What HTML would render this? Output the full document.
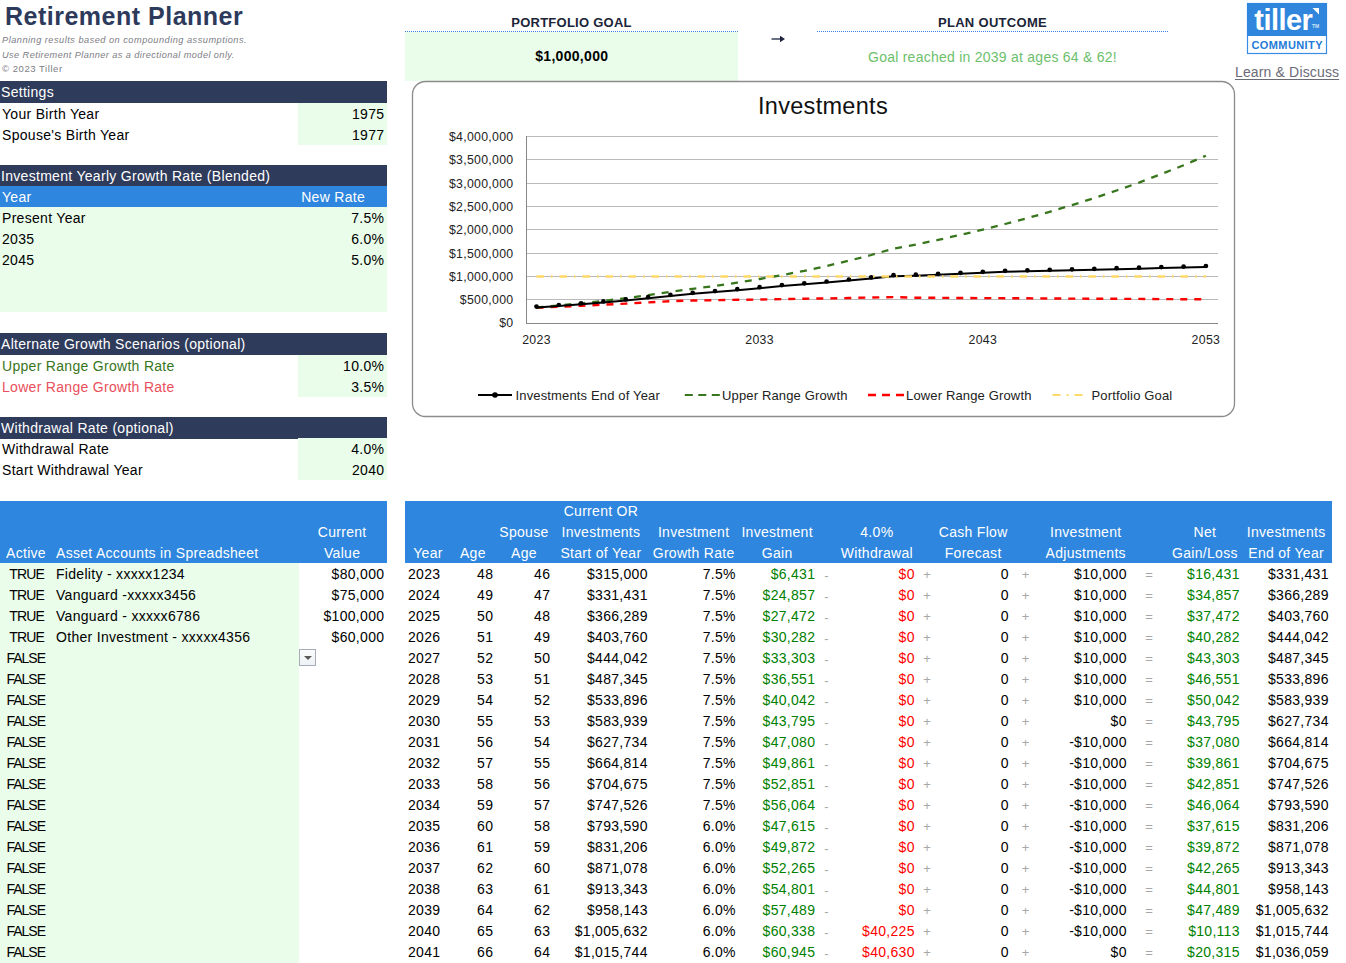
<!DOCTYPE html>
<html><head><meta charset="utf-8"><style>
html,body{margin:0;padding:0;background:#fff;}
body{width:1346px;height:963px;overflow:hidden;position:relative;font-family:"Liberation Sans",sans-serif;}
.t{position:absolute;white-space:nowrap;line-height:21px;height:21px;font-family:"Liberation Sans",sans-serif;}
</style></head><body>
<div class="t" style="left:5px;top:0.8px;color:#2d3a5c;font-size:25px;font-weight:bold;line-height:30px;height:30px;letter-spacing:0.5px;">Retirement Planner</div>
<div class="t" style="left:2px;top:32.5px;color:#7d7d85;font-size:9.2px;font-weight:normal;font-style:italic;line-height:14px;height:14px;letter-spacing:0.5px;">Planning results based on compounding assumptions.</div>
<div class="t" style="left:2px;top:47.5px;color:#7d7d85;font-size:9.2px;font-weight:normal;font-style:italic;line-height:14px;height:14px;letter-spacing:0.42px;">Use Retirement Planner as a directional model only.</div>
<div class="t" style="left:2px;top:62.3px;color:#7d7d85;font-size:9.5px;font-weight:normal;line-height:14px;height:14px;letter-spacing:0.55px;">© 2023 Tiller</div>
<div style="position:absolute;left:0px;top:81px;width:387px;height:22px;background:#2f3b5b;"></div>
<div class="t" style="left:1px;top:82px;color:#fff;font-size:14px;font-weight:normal;letter-spacing:0.3px;">Settings</div>
<div style="position:absolute;left:298px;top:103px;width:89px;height:42px;background:#eafcea;"></div>
<div class="t" style="left:2px;top:104px;color:#000;font-size:14px;font-weight:normal;letter-spacing:0.3px;">Your Birth Year</div>
<div class="t" style="left:-15.70px;width:400px;text-align:right;top:104px;color:#000;font-size:14px;font-weight:normal;letter-spacing:0.3px;">1975</div>
<div class="t" style="left:2px;top:125px;color:#000;font-size:14px;font-weight:normal;letter-spacing:0.3px;">Spouse's Birth Year</div>
<div class="t" style="left:-15.70px;width:400px;text-align:right;top:125px;color:#000;font-size:14px;font-weight:normal;letter-spacing:0.3px;">1977</div>
<div style="position:absolute;left:0px;top:165px;width:387px;height:21px;background:#2f3b5b;"></div>
<div class="t" style="left:1px;top:166px;color:#fff;font-size:14px;font-weight:normal;letter-spacing:0.3px;">Investment Yearly Growth Rate (Blended)</div>
<div style="position:absolute;left:0px;top:186px;width:387px;height:21px;background:#2e86de;"></div>
<div class="t" style="left:2px;top:187px;color:#fff;font-size:14px;font-weight:normal;letter-spacing:0.3px;">Year</div>
<div class="t" style="left:133.15px;width:400px;text-align:center;top:187px;color:#fff;font-size:14px;font-weight:normal;letter-spacing:0.3px;">New Rate</div>
<div style="position:absolute;left:0px;top:207px;width:387px;height:105px;background:#eafcea;"></div>
<div class="t" style="left:2px;top:208px;color:#000;font-size:14px;font-weight:normal;letter-spacing:0.3px;">Present Year</div>
<div class="t" style="left:-15.70px;width:400px;text-align:right;top:208px;color:#000;font-size:14px;font-weight:normal;letter-spacing:0.3px;">7.5%</div>
<div class="t" style="left:2px;top:229px;color:#000;font-size:14px;font-weight:normal;letter-spacing:0.3px;">2035</div>
<div class="t" style="left:-15.70px;width:400px;text-align:right;top:229px;color:#000;font-size:14px;font-weight:normal;letter-spacing:0.3px;">6.0%</div>
<div class="t" style="left:2px;top:250px;color:#000;font-size:14px;font-weight:normal;letter-spacing:0.3px;">2045</div>
<div class="t" style="left:-15.70px;width:400px;text-align:right;top:250px;color:#000;font-size:14px;font-weight:normal;letter-spacing:0.3px;">5.0%</div>
<div style="position:absolute;left:0px;top:333px;width:387px;height:22px;background:#2f3b5b;"></div>
<div class="t" style="left:1px;top:334px;color:#fff;font-size:14px;font-weight:normal;letter-spacing:0.3px;">Alternate Growth Scenarios (optional)</div>
<div style="position:absolute;left:298px;top:355px;width:89px;height:42px;background:#eafcea;"></div>
<div class="t" style="left:2px;top:356px;color:#38761d;font-size:14px;font-weight:normal;letter-spacing:0.3px;">Upper Range Growth Rate</div>
<div class="t" style="left:-15.70px;width:400px;text-align:right;top:356px;color:#000;font-size:14px;font-weight:normal;letter-spacing:0.3px;">10.0%</div>
<div class="t" style="left:2px;top:377px;color:#e94f5b;font-size:14px;font-weight:normal;letter-spacing:0.3px;">Lower Range Growth Rate</div>
<div class="t" style="left:-15.70px;width:400px;text-align:right;top:377px;color:#000;font-size:14px;font-weight:normal;letter-spacing:0.3px;">3.5%</div>
<div style="position:absolute;left:0px;top:417px;width:387px;height:21.6px;background:#2f3b5b;"></div>
<div class="t" style="left:1px;top:418px;color:#fff;font-size:14px;font-weight:normal;letter-spacing:0.3px;">Withdrawal Rate (optional)</div>
<div style="position:absolute;left:298px;top:438px;width:89px;height:42px;background:#eafcea;"></div>
<div class="t" style="left:2px;top:439px;color:#000;font-size:14px;font-weight:normal;letter-spacing:0.3px;">Withdrawal Rate</div>
<div class="t" style="left:-15.70px;width:400px;text-align:right;top:439px;color:#000;font-size:14px;font-weight:normal;letter-spacing:0.3px;">4.0%</div>
<div class="t" style="left:2px;top:460px;color:#000;font-size:14px;font-weight:normal;letter-spacing:0.3px;">Start Withdrawal Year</div>
<div class="t" style="left:-15.70px;width:400px;text-align:right;top:460px;color:#000;font-size:14px;font-weight:normal;letter-spacing:0.3px;">2040</div>
<div style="position:absolute;left:0px;top:501px;width:387px;height:62px;background:#2e86de;"></div>
<div class="t" style="left:6px;top:543px;color:#fff;font-size:14px;font-weight:normal;letter-spacing:0.3px;">Active</div>
<div class="t" style="left:56px;top:543px;color:#fff;font-size:14px;font-weight:normal;letter-spacing:0.3px;">Asset Accounts in Spreadsheet</div>
<div class="t" style="left:142.15px;width:400px;text-align:center;top:522px;color:#fff;font-size:14px;font-weight:normal;letter-spacing:0.3px;">Current</div>
<div class="t" style="left:142.15px;width:400px;text-align:center;top:543px;color:#fff;font-size:14px;font-weight:normal;letter-spacing:0.3px;">Value</div>
<div style="position:absolute;left:0px;top:563px;width:299px;height:400px;background:#eafcea;"></div>
<div class="t" style="left:-173.40px;width:400px;text-align:center;top:564px;color:#000;font-size:14px;font-weight:normal;letter-spacing:-0.9px;">TRUE</div>
<div class="t" style="left:56px;top:564px;color:#000;font-size:14px;font-weight:normal;letter-spacing:0.3px;">Fidelity - xxxxx1234</div>
<div class="t" style="left:-15.70px;width:400px;text-align:right;top:564px;color:#000;font-size:14px;font-weight:normal;letter-spacing:0.3px;">$80,000</div>
<div class="t" style="left:-173.40px;width:400px;text-align:center;top:585px;color:#000;font-size:14px;font-weight:normal;letter-spacing:-0.9px;">TRUE</div>
<div class="t" style="left:56px;top:585px;color:#000;font-size:14px;font-weight:normal;letter-spacing:0.3px;">Vanguard -xxxxx3456</div>
<div class="t" style="left:-15.70px;width:400px;text-align:right;top:585px;color:#000;font-size:14px;font-weight:normal;letter-spacing:0.3px;">$75,000</div>
<div class="t" style="left:-173.40px;width:400px;text-align:center;top:606px;color:#000;font-size:14px;font-weight:normal;letter-spacing:-0.9px;">TRUE</div>
<div class="t" style="left:56px;top:606px;color:#000;font-size:14px;font-weight:normal;letter-spacing:0.3px;">Vanguard - xxxxx6786</div>
<div class="t" style="left:-15.70px;width:400px;text-align:right;top:606px;color:#000;font-size:14px;font-weight:normal;letter-spacing:0.3px;">$100,000</div>
<div class="t" style="left:-173.40px;width:400px;text-align:center;top:627px;color:#000;font-size:14px;font-weight:normal;letter-spacing:-0.9px;">TRUE</div>
<div class="t" style="left:56px;top:627px;color:#000;font-size:14px;font-weight:normal;letter-spacing:0.3px;">Other Investment - xxxxx4356</div>
<div class="t" style="left:-15.70px;width:400px;text-align:right;top:627px;color:#000;font-size:14px;font-weight:normal;letter-spacing:0.3px;">$60,000</div>
<div class="t" style="left:-174.30px;width:400px;text-align:center;top:648px;color:#000;font-size:14px;font-weight:normal;letter-spacing:-1px;">FALSE</div>
<div class="t" style="left:-174.30px;width:400px;text-align:center;top:669px;color:#000;font-size:14px;font-weight:normal;letter-spacing:-1px;">FALSE</div>
<div class="t" style="left:-174.30px;width:400px;text-align:center;top:690px;color:#000;font-size:14px;font-weight:normal;letter-spacing:-1px;">FALSE</div>
<div class="t" style="left:-174.30px;width:400px;text-align:center;top:711px;color:#000;font-size:14px;font-weight:normal;letter-spacing:-1px;">FALSE</div>
<div class="t" style="left:-174.30px;width:400px;text-align:center;top:732px;color:#000;font-size:14px;font-weight:normal;letter-spacing:-1px;">FALSE</div>
<div class="t" style="left:-174.30px;width:400px;text-align:center;top:753px;color:#000;font-size:14px;font-weight:normal;letter-spacing:-1px;">FALSE</div>
<div class="t" style="left:-174.30px;width:400px;text-align:center;top:774px;color:#000;font-size:14px;font-weight:normal;letter-spacing:-1px;">FALSE</div>
<div class="t" style="left:-174.30px;width:400px;text-align:center;top:795px;color:#000;font-size:14px;font-weight:normal;letter-spacing:-1px;">FALSE</div>
<div class="t" style="left:-174.30px;width:400px;text-align:center;top:816px;color:#000;font-size:14px;font-weight:normal;letter-spacing:-1px;">FALSE</div>
<div class="t" style="left:-174.30px;width:400px;text-align:center;top:837px;color:#000;font-size:14px;font-weight:normal;letter-spacing:-1px;">FALSE</div>
<div class="t" style="left:-174.30px;width:400px;text-align:center;top:858px;color:#000;font-size:14px;font-weight:normal;letter-spacing:-1px;">FALSE</div>
<div class="t" style="left:-174.30px;width:400px;text-align:center;top:879px;color:#000;font-size:14px;font-weight:normal;letter-spacing:-1px;">FALSE</div>
<div class="t" style="left:-174.30px;width:400px;text-align:center;top:900px;color:#000;font-size:14px;font-weight:normal;letter-spacing:-1px;">FALSE</div>
<div class="t" style="left:-174.30px;width:400px;text-align:center;top:921px;color:#000;font-size:14px;font-weight:normal;letter-spacing:-1px;">FALSE</div>
<div class="t" style="left:-174.30px;width:400px;text-align:center;top:942px;color:#000;font-size:14px;font-weight:normal;letter-spacing:-1px;">FALSE</div>
<div style="position:absolute;left:299px;top:649px;width:17px;height:17px;border:1px solid #a7adb7;background:linear-gradient(#fbfcfd,#eef1f5);box-sizing:border-box"></div>
<div style="position:absolute;left:303.5px;top:656px;width:0;height:0;border-left:4px solid transparent;border-right:4px solid transparent;border-top:4.5px solid #5a5a5a"></div>
<div style="position:absolute;left:405px;top:501px;width:927px;height:62px;background:#2e86de;"></div>
<div class="t" style="left:227.95px;width:400px;text-align:center;top:543px;color:#fff;font-size:14px;font-weight:normal;letter-spacing:0.3px;">Year</div>
<div class="t" style="left:272.85px;width:400px;text-align:center;top:543px;color:#fff;font-size:14px;font-weight:normal;letter-spacing:0.3px;">Age</div>
<div class="t" style="left:323.95px;width:400px;text-align:center;top:522px;color:#fff;font-size:14px;font-weight:normal;letter-spacing:0.3px;">Spouse</div>
<div class="t" style="left:323.95px;width:400px;text-align:center;top:543px;color:#fff;font-size:14px;font-weight:normal;letter-spacing:0.3px;">Age</div>
<div class="t" style="left:400.95px;width:400px;text-align:center;top:501px;color:#fff;font-size:14px;font-weight:normal;letter-spacing:0.3px;">Current OR</div>
<div class="t" style="left:400.95px;width:400px;text-align:center;top:522px;color:#fff;font-size:14px;font-weight:normal;letter-spacing:0.3px;">Investments</div>
<div class="t" style="left:400.95px;width:400px;text-align:center;top:543px;color:#fff;font-size:14px;font-weight:normal;letter-spacing:0.3px;">Start of Year</div>
<div class="t" style="left:493.65px;width:400px;text-align:center;top:522px;color:#fff;font-size:14px;font-weight:normal;letter-spacing:0.3px;">Investment</div>
<div class="t" style="left:493.65px;width:400px;text-align:center;top:543px;color:#fff;font-size:14px;font-weight:normal;letter-spacing:0.3px;">Growth Rate</div>
<div class="t" style="left:577.15px;width:400px;text-align:center;top:522px;color:#fff;font-size:14px;font-weight:normal;letter-spacing:0.3px;">Investment</div>
<div class="t" style="left:577.15px;width:400px;text-align:center;top:543px;color:#fff;font-size:14px;font-weight:normal;letter-spacing:0.3px;">Gain</div>
<div class="t" style="left:676.85px;width:400px;text-align:center;top:522px;color:#fff;font-size:14px;font-weight:normal;letter-spacing:0.3px;">4.0%</div>
<div class="t" style="left:676.85px;width:400px;text-align:center;top:543px;color:#fff;font-size:14px;font-weight:normal;letter-spacing:0.3px;">Withdrawal</div>
<div class="t" style="left:773.15px;width:400px;text-align:center;top:522px;color:#fff;font-size:14px;font-weight:normal;letter-spacing:0.3px;">Cash Flow</div>
<div class="t" style="left:773.15px;width:400px;text-align:center;top:543px;color:#fff;font-size:14px;font-weight:normal;letter-spacing:0.3px;">Forecast</div>
<div class="t" style="left:885.75px;width:400px;text-align:center;top:522px;color:#fff;font-size:14px;font-weight:normal;letter-spacing:0.3px;">Investment</div>
<div class="t" style="left:885.75px;width:400px;text-align:center;top:543px;color:#fff;font-size:14px;font-weight:normal;letter-spacing:0.3px;">Adjustments</div>
<div class="t" style="left:1004.95px;width:400px;text-align:center;top:522px;color:#fff;font-size:14px;font-weight:normal;letter-spacing:0.3px;">Net</div>
<div class="t" style="left:1004.95px;width:400px;text-align:center;top:543px;color:#fff;font-size:14px;font-weight:normal;letter-spacing:0.3px;">Gain/Loss</div>
<div class="t" style="left:1086.15px;width:400px;text-align:center;top:522px;color:#fff;font-size:14px;font-weight:normal;letter-spacing:0.3px;">Investments</div>
<div class="t" style="left:1086.15px;width:400px;text-align:center;top:543px;color:#fff;font-size:14px;font-weight:normal;letter-spacing:0.3px;">End of Year</div>
<div class="t" style="left:408px;top:564px;color:#000;font-size:14px;font-weight:normal;letter-spacing:0.3px;">2023</div>
<div class="t" style="left:93.30px;width:400px;text-align:right;top:564px;color:#000;font-size:14px;font-weight:normal;letter-spacing:0.3px;">48</div>
<div class="t" style="left:150.30px;width:400px;text-align:right;top:564px;color:#000;font-size:14px;font-weight:normal;letter-spacing:0.3px;">46</div>
<div class="t" style="left:247.80px;width:400px;text-align:right;top:564px;color:#000;font-size:14px;font-weight:normal;letter-spacing:0.3px;">$315,000</div>
<div class="t" style="left:335.80px;width:400px;text-align:right;top:564px;color:#000;font-size:14px;font-weight:normal;letter-spacing:0.3px;">7.5%</div>
<div class="t" style="left:415.30px;width:400px;text-align:right;top:564px;color:#008000;font-size:14px;font-weight:normal;letter-spacing:0.3px;">$6,431</div>
<div class="t" style="left:626.65px;width:400px;text-align:center;top:564.8px;color:#a8a8a8;font-size:13px;font-weight:normal;letter-spacing:0.3px;">-</div>
<div class="t" style="left:514.80px;width:400px;text-align:right;top:564px;color:#ff0000;font-size:14px;font-weight:normal;letter-spacing:0.3px;">$0</div>
<div class="t" style="left:727.15px;width:400px;text-align:center;top:564px;color:#a8a8a8;font-size:13px;font-weight:normal;letter-spacing:0.3px;">+</div>
<div class="t" style="left:608.80px;width:400px;text-align:right;top:564px;color:#000;font-size:14px;font-weight:normal;letter-spacing:0.3px;">0</div>
<div class="t" style="left:825.65px;width:400px;text-align:center;top:564px;color:#a8a8a8;font-size:13px;font-weight:normal;letter-spacing:0.3px;">+</div>
<div class="t" style="left:726.80px;width:400px;text-align:right;top:564px;color:#000;font-size:14px;font-weight:normal;letter-spacing:0.3px;">$10,000</div>
<div class="t" style="left:949.15px;width:400px;text-align:center;top:564px;color:#a8a8a8;font-size:13px;font-weight:normal;letter-spacing:0.3px;">=</div>
<div class="t" style="left:839.80px;width:400px;text-align:right;top:564px;color:#008000;font-size:14px;font-weight:normal;letter-spacing:0.3px;">$16,431</div>
<div class="t" style="left:928.80px;width:400px;text-align:right;top:564px;color:#000;font-size:14px;font-weight:normal;letter-spacing:0.3px;">$331,431</div>
<div class="t" style="left:408px;top:585px;color:#000;font-size:14px;font-weight:normal;letter-spacing:0.3px;">2024</div>
<div class="t" style="left:93.30px;width:400px;text-align:right;top:585px;color:#000;font-size:14px;font-weight:normal;letter-spacing:0.3px;">49</div>
<div class="t" style="left:150.30px;width:400px;text-align:right;top:585px;color:#000;font-size:14px;font-weight:normal;letter-spacing:0.3px;">47</div>
<div class="t" style="left:247.80px;width:400px;text-align:right;top:585px;color:#000;font-size:14px;font-weight:normal;letter-spacing:0.3px;">$331,431</div>
<div class="t" style="left:335.80px;width:400px;text-align:right;top:585px;color:#000;font-size:14px;font-weight:normal;letter-spacing:0.3px;">7.5%</div>
<div class="t" style="left:415.30px;width:400px;text-align:right;top:585px;color:#008000;font-size:14px;font-weight:normal;letter-spacing:0.3px;">$24,857</div>
<div class="t" style="left:626.65px;width:400px;text-align:center;top:585.8px;color:#a8a8a8;font-size:13px;font-weight:normal;letter-spacing:0.3px;">-</div>
<div class="t" style="left:514.80px;width:400px;text-align:right;top:585px;color:#ff0000;font-size:14px;font-weight:normal;letter-spacing:0.3px;">$0</div>
<div class="t" style="left:727.15px;width:400px;text-align:center;top:585px;color:#a8a8a8;font-size:13px;font-weight:normal;letter-spacing:0.3px;">+</div>
<div class="t" style="left:608.80px;width:400px;text-align:right;top:585px;color:#000;font-size:14px;font-weight:normal;letter-spacing:0.3px;">0</div>
<div class="t" style="left:825.65px;width:400px;text-align:center;top:585px;color:#a8a8a8;font-size:13px;font-weight:normal;letter-spacing:0.3px;">+</div>
<div class="t" style="left:726.80px;width:400px;text-align:right;top:585px;color:#000;font-size:14px;font-weight:normal;letter-spacing:0.3px;">$10,000</div>
<div class="t" style="left:949.15px;width:400px;text-align:center;top:585px;color:#a8a8a8;font-size:13px;font-weight:normal;letter-spacing:0.3px;">=</div>
<div class="t" style="left:839.80px;width:400px;text-align:right;top:585px;color:#008000;font-size:14px;font-weight:normal;letter-spacing:0.3px;">$34,857</div>
<div class="t" style="left:928.80px;width:400px;text-align:right;top:585px;color:#000;font-size:14px;font-weight:normal;letter-spacing:0.3px;">$366,289</div>
<div class="t" style="left:408px;top:606px;color:#000;font-size:14px;font-weight:normal;letter-spacing:0.3px;">2025</div>
<div class="t" style="left:93.30px;width:400px;text-align:right;top:606px;color:#000;font-size:14px;font-weight:normal;letter-spacing:0.3px;">50</div>
<div class="t" style="left:150.30px;width:400px;text-align:right;top:606px;color:#000;font-size:14px;font-weight:normal;letter-spacing:0.3px;">48</div>
<div class="t" style="left:247.80px;width:400px;text-align:right;top:606px;color:#000;font-size:14px;font-weight:normal;letter-spacing:0.3px;">$366,289</div>
<div class="t" style="left:335.80px;width:400px;text-align:right;top:606px;color:#000;font-size:14px;font-weight:normal;letter-spacing:0.3px;">7.5%</div>
<div class="t" style="left:415.30px;width:400px;text-align:right;top:606px;color:#008000;font-size:14px;font-weight:normal;letter-spacing:0.3px;">$27,472</div>
<div class="t" style="left:626.65px;width:400px;text-align:center;top:606.8px;color:#a8a8a8;font-size:13px;font-weight:normal;letter-spacing:0.3px;">-</div>
<div class="t" style="left:514.80px;width:400px;text-align:right;top:606px;color:#ff0000;font-size:14px;font-weight:normal;letter-spacing:0.3px;">$0</div>
<div class="t" style="left:727.15px;width:400px;text-align:center;top:606px;color:#a8a8a8;font-size:13px;font-weight:normal;letter-spacing:0.3px;">+</div>
<div class="t" style="left:608.80px;width:400px;text-align:right;top:606px;color:#000;font-size:14px;font-weight:normal;letter-spacing:0.3px;">0</div>
<div class="t" style="left:825.65px;width:400px;text-align:center;top:606px;color:#a8a8a8;font-size:13px;font-weight:normal;letter-spacing:0.3px;">+</div>
<div class="t" style="left:726.80px;width:400px;text-align:right;top:606px;color:#000;font-size:14px;font-weight:normal;letter-spacing:0.3px;">$10,000</div>
<div class="t" style="left:949.15px;width:400px;text-align:center;top:606px;color:#a8a8a8;font-size:13px;font-weight:normal;letter-spacing:0.3px;">=</div>
<div class="t" style="left:839.80px;width:400px;text-align:right;top:606px;color:#008000;font-size:14px;font-weight:normal;letter-spacing:0.3px;">$37,472</div>
<div class="t" style="left:928.80px;width:400px;text-align:right;top:606px;color:#000;font-size:14px;font-weight:normal;letter-spacing:0.3px;">$403,760</div>
<div class="t" style="left:408px;top:627px;color:#000;font-size:14px;font-weight:normal;letter-spacing:0.3px;">2026</div>
<div class="t" style="left:93.30px;width:400px;text-align:right;top:627px;color:#000;font-size:14px;font-weight:normal;letter-spacing:0.3px;">51</div>
<div class="t" style="left:150.30px;width:400px;text-align:right;top:627px;color:#000;font-size:14px;font-weight:normal;letter-spacing:0.3px;">49</div>
<div class="t" style="left:247.80px;width:400px;text-align:right;top:627px;color:#000;font-size:14px;font-weight:normal;letter-spacing:0.3px;">$403,760</div>
<div class="t" style="left:335.80px;width:400px;text-align:right;top:627px;color:#000;font-size:14px;font-weight:normal;letter-spacing:0.3px;">7.5%</div>
<div class="t" style="left:415.30px;width:400px;text-align:right;top:627px;color:#008000;font-size:14px;font-weight:normal;letter-spacing:0.3px;">$30,282</div>
<div class="t" style="left:626.65px;width:400px;text-align:center;top:627.8px;color:#a8a8a8;font-size:13px;font-weight:normal;letter-spacing:0.3px;">-</div>
<div class="t" style="left:514.80px;width:400px;text-align:right;top:627px;color:#ff0000;font-size:14px;font-weight:normal;letter-spacing:0.3px;">$0</div>
<div class="t" style="left:727.15px;width:400px;text-align:center;top:627px;color:#a8a8a8;font-size:13px;font-weight:normal;letter-spacing:0.3px;">+</div>
<div class="t" style="left:608.80px;width:400px;text-align:right;top:627px;color:#000;font-size:14px;font-weight:normal;letter-spacing:0.3px;">0</div>
<div class="t" style="left:825.65px;width:400px;text-align:center;top:627px;color:#a8a8a8;font-size:13px;font-weight:normal;letter-spacing:0.3px;">+</div>
<div class="t" style="left:726.80px;width:400px;text-align:right;top:627px;color:#000;font-size:14px;font-weight:normal;letter-spacing:0.3px;">$10,000</div>
<div class="t" style="left:949.15px;width:400px;text-align:center;top:627px;color:#a8a8a8;font-size:13px;font-weight:normal;letter-spacing:0.3px;">=</div>
<div class="t" style="left:839.80px;width:400px;text-align:right;top:627px;color:#008000;font-size:14px;font-weight:normal;letter-spacing:0.3px;">$40,282</div>
<div class="t" style="left:928.80px;width:400px;text-align:right;top:627px;color:#000;font-size:14px;font-weight:normal;letter-spacing:0.3px;">$444,042</div>
<div class="t" style="left:408px;top:648px;color:#000;font-size:14px;font-weight:normal;letter-spacing:0.3px;">2027</div>
<div class="t" style="left:93.30px;width:400px;text-align:right;top:648px;color:#000;font-size:14px;font-weight:normal;letter-spacing:0.3px;">52</div>
<div class="t" style="left:150.30px;width:400px;text-align:right;top:648px;color:#000;font-size:14px;font-weight:normal;letter-spacing:0.3px;">50</div>
<div class="t" style="left:247.80px;width:400px;text-align:right;top:648px;color:#000;font-size:14px;font-weight:normal;letter-spacing:0.3px;">$444,042</div>
<div class="t" style="left:335.80px;width:400px;text-align:right;top:648px;color:#000;font-size:14px;font-weight:normal;letter-spacing:0.3px;">7.5%</div>
<div class="t" style="left:415.30px;width:400px;text-align:right;top:648px;color:#008000;font-size:14px;font-weight:normal;letter-spacing:0.3px;">$33,303</div>
<div class="t" style="left:626.65px;width:400px;text-align:center;top:648.8px;color:#a8a8a8;font-size:13px;font-weight:normal;letter-spacing:0.3px;">-</div>
<div class="t" style="left:514.80px;width:400px;text-align:right;top:648px;color:#ff0000;font-size:14px;font-weight:normal;letter-spacing:0.3px;">$0</div>
<div class="t" style="left:727.15px;width:400px;text-align:center;top:648px;color:#a8a8a8;font-size:13px;font-weight:normal;letter-spacing:0.3px;">+</div>
<div class="t" style="left:608.80px;width:400px;text-align:right;top:648px;color:#000;font-size:14px;font-weight:normal;letter-spacing:0.3px;">0</div>
<div class="t" style="left:825.65px;width:400px;text-align:center;top:648px;color:#a8a8a8;font-size:13px;font-weight:normal;letter-spacing:0.3px;">+</div>
<div class="t" style="left:726.80px;width:400px;text-align:right;top:648px;color:#000;font-size:14px;font-weight:normal;letter-spacing:0.3px;">$10,000</div>
<div class="t" style="left:949.15px;width:400px;text-align:center;top:648px;color:#a8a8a8;font-size:13px;font-weight:normal;letter-spacing:0.3px;">=</div>
<div class="t" style="left:839.80px;width:400px;text-align:right;top:648px;color:#008000;font-size:14px;font-weight:normal;letter-spacing:0.3px;">$43,303</div>
<div class="t" style="left:928.80px;width:400px;text-align:right;top:648px;color:#000;font-size:14px;font-weight:normal;letter-spacing:0.3px;">$487,345</div>
<div class="t" style="left:408px;top:669px;color:#000;font-size:14px;font-weight:normal;letter-spacing:0.3px;">2028</div>
<div class="t" style="left:93.30px;width:400px;text-align:right;top:669px;color:#000;font-size:14px;font-weight:normal;letter-spacing:0.3px;">53</div>
<div class="t" style="left:150.30px;width:400px;text-align:right;top:669px;color:#000;font-size:14px;font-weight:normal;letter-spacing:0.3px;">51</div>
<div class="t" style="left:247.80px;width:400px;text-align:right;top:669px;color:#000;font-size:14px;font-weight:normal;letter-spacing:0.3px;">$487,345</div>
<div class="t" style="left:335.80px;width:400px;text-align:right;top:669px;color:#000;font-size:14px;font-weight:normal;letter-spacing:0.3px;">7.5%</div>
<div class="t" style="left:415.30px;width:400px;text-align:right;top:669px;color:#008000;font-size:14px;font-weight:normal;letter-spacing:0.3px;">$36,551</div>
<div class="t" style="left:626.65px;width:400px;text-align:center;top:669.8px;color:#a8a8a8;font-size:13px;font-weight:normal;letter-spacing:0.3px;">-</div>
<div class="t" style="left:514.80px;width:400px;text-align:right;top:669px;color:#ff0000;font-size:14px;font-weight:normal;letter-spacing:0.3px;">$0</div>
<div class="t" style="left:727.15px;width:400px;text-align:center;top:669px;color:#a8a8a8;font-size:13px;font-weight:normal;letter-spacing:0.3px;">+</div>
<div class="t" style="left:608.80px;width:400px;text-align:right;top:669px;color:#000;font-size:14px;font-weight:normal;letter-spacing:0.3px;">0</div>
<div class="t" style="left:825.65px;width:400px;text-align:center;top:669px;color:#a8a8a8;font-size:13px;font-weight:normal;letter-spacing:0.3px;">+</div>
<div class="t" style="left:726.80px;width:400px;text-align:right;top:669px;color:#000;font-size:14px;font-weight:normal;letter-spacing:0.3px;">$10,000</div>
<div class="t" style="left:949.15px;width:400px;text-align:center;top:669px;color:#a8a8a8;font-size:13px;font-weight:normal;letter-spacing:0.3px;">=</div>
<div class="t" style="left:839.80px;width:400px;text-align:right;top:669px;color:#008000;font-size:14px;font-weight:normal;letter-spacing:0.3px;">$46,551</div>
<div class="t" style="left:928.80px;width:400px;text-align:right;top:669px;color:#000;font-size:14px;font-weight:normal;letter-spacing:0.3px;">$533,896</div>
<div class="t" style="left:408px;top:690px;color:#000;font-size:14px;font-weight:normal;letter-spacing:0.3px;">2029</div>
<div class="t" style="left:93.30px;width:400px;text-align:right;top:690px;color:#000;font-size:14px;font-weight:normal;letter-spacing:0.3px;">54</div>
<div class="t" style="left:150.30px;width:400px;text-align:right;top:690px;color:#000;font-size:14px;font-weight:normal;letter-spacing:0.3px;">52</div>
<div class="t" style="left:247.80px;width:400px;text-align:right;top:690px;color:#000;font-size:14px;font-weight:normal;letter-spacing:0.3px;">$533,896</div>
<div class="t" style="left:335.80px;width:400px;text-align:right;top:690px;color:#000;font-size:14px;font-weight:normal;letter-spacing:0.3px;">7.5%</div>
<div class="t" style="left:415.30px;width:400px;text-align:right;top:690px;color:#008000;font-size:14px;font-weight:normal;letter-spacing:0.3px;">$40,042</div>
<div class="t" style="left:626.65px;width:400px;text-align:center;top:690.8px;color:#a8a8a8;font-size:13px;font-weight:normal;letter-spacing:0.3px;">-</div>
<div class="t" style="left:514.80px;width:400px;text-align:right;top:690px;color:#ff0000;font-size:14px;font-weight:normal;letter-spacing:0.3px;">$0</div>
<div class="t" style="left:727.15px;width:400px;text-align:center;top:690px;color:#a8a8a8;font-size:13px;font-weight:normal;letter-spacing:0.3px;">+</div>
<div class="t" style="left:608.80px;width:400px;text-align:right;top:690px;color:#000;font-size:14px;font-weight:normal;letter-spacing:0.3px;">0</div>
<div class="t" style="left:825.65px;width:400px;text-align:center;top:690px;color:#a8a8a8;font-size:13px;font-weight:normal;letter-spacing:0.3px;">+</div>
<div class="t" style="left:726.80px;width:400px;text-align:right;top:690px;color:#000;font-size:14px;font-weight:normal;letter-spacing:0.3px;">$10,000</div>
<div class="t" style="left:949.15px;width:400px;text-align:center;top:690px;color:#a8a8a8;font-size:13px;font-weight:normal;letter-spacing:0.3px;">=</div>
<div class="t" style="left:839.80px;width:400px;text-align:right;top:690px;color:#008000;font-size:14px;font-weight:normal;letter-spacing:0.3px;">$50,042</div>
<div class="t" style="left:928.80px;width:400px;text-align:right;top:690px;color:#000;font-size:14px;font-weight:normal;letter-spacing:0.3px;">$583,939</div>
<div class="t" style="left:408px;top:711px;color:#000;font-size:14px;font-weight:normal;letter-spacing:0.3px;">2030</div>
<div class="t" style="left:93.30px;width:400px;text-align:right;top:711px;color:#000;font-size:14px;font-weight:normal;letter-spacing:0.3px;">55</div>
<div class="t" style="left:150.30px;width:400px;text-align:right;top:711px;color:#000;font-size:14px;font-weight:normal;letter-spacing:0.3px;">53</div>
<div class="t" style="left:247.80px;width:400px;text-align:right;top:711px;color:#000;font-size:14px;font-weight:normal;letter-spacing:0.3px;">$583,939</div>
<div class="t" style="left:335.80px;width:400px;text-align:right;top:711px;color:#000;font-size:14px;font-weight:normal;letter-spacing:0.3px;">7.5%</div>
<div class="t" style="left:415.30px;width:400px;text-align:right;top:711px;color:#008000;font-size:14px;font-weight:normal;letter-spacing:0.3px;">$43,795</div>
<div class="t" style="left:626.65px;width:400px;text-align:center;top:711.8px;color:#a8a8a8;font-size:13px;font-weight:normal;letter-spacing:0.3px;">-</div>
<div class="t" style="left:514.80px;width:400px;text-align:right;top:711px;color:#ff0000;font-size:14px;font-weight:normal;letter-spacing:0.3px;">$0</div>
<div class="t" style="left:727.15px;width:400px;text-align:center;top:711px;color:#a8a8a8;font-size:13px;font-weight:normal;letter-spacing:0.3px;">+</div>
<div class="t" style="left:608.80px;width:400px;text-align:right;top:711px;color:#000;font-size:14px;font-weight:normal;letter-spacing:0.3px;">0</div>
<div class="t" style="left:825.65px;width:400px;text-align:center;top:711px;color:#a8a8a8;font-size:13px;font-weight:normal;letter-spacing:0.3px;">+</div>
<div class="t" style="left:726.80px;width:400px;text-align:right;top:711px;color:#000;font-size:14px;font-weight:normal;letter-spacing:0.3px;">$0</div>
<div class="t" style="left:949.15px;width:400px;text-align:center;top:711px;color:#a8a8a8;font-size:13px;font-weight:normal;letter-spacing:0.3px;">=</div>
<div class="t" style="left:839.80px;width:400px;text-align:right;top:711px;color:#008000;font-size:14px;font-weight:normal;letter-spacing:0.3px;">$43,795</div>
<div class="t" style="left:928.80px;width:400px;text-align:right;top:711px;color:#000;font-size:14px;font-weight:normal;letter-spacing:0.3px;">$627,734</div>
<div class="t" style="left:408px;top:732px;color:#000;font-size:14px;font-weight:normal;letter-spacing:0.3px;">2031</div>
<div class="t" style="left:93.30px;width:400px;text-align:right;top:732px;color:#000;font-size:14px;font-weight:normal;letter-spacing:0.3px;">56</div>
<div class="t" style="left:150.30px;width:400px;text-align:right;top:732px;color:#000;font-size:14px;font-weight:normal;letter-spacing:0.3px;">54</div>
<div class="t" style="left:247.80px;width:400px;text-align:right;top:732px;color:#000;font-size:14px;font-weight:normal;letter-spacing:0.3px;">$627,734</div>
<div class="t" style="left:335.80px;width:400px;text-align:right;top:732px;color:#000;font-size:14px;font-weight:normal;letter-spacing:0.3px;">7.5%</div>
<div class="t" style="left:415.30px;width:400px;text-align:right;top:732px;color:#008000;font-size:14px;font-weight:normal;letter-spacing:0.3px;">$47,080</div>
<div class="t" style="left:626.65px;width:400px;text-align:center;top:732.8px;color:#a8a8a8;font-size:13px;font-weight:normal;letter-spacing:0.3px;">-</div>
<div class="t" style="left:514.80px;width:400px;text-align:right;top:732px;color:#ff0000;font-size:14px;font-weight:normal;letter-spacing:0.3px;">$0</div>
<div class="t" style="left:727.15px;width:400px;text-align:center;top:732px;color:#a8a8a8;font-size:13px;font-weight:normal;letter-spacing:0.3px;">+</div>
<div class="t" style="left:608.80px;width:400px;text-align:right;top:732px;color:#000;font-size:14px;font-weight:normal;letter-spacing:0.3px;">0</div>
<div class="t" style="left:825.65px;width:400px;text-align:center;top:732px;color:#a8a8a8;font-size:13px;font-weight:normal;letter-spacing:0.3px;">+</div>
<div class="t" style="left:726.80px;width:400px;text-align:right;top:732px;color:#000;font-size:14px;font-weight:normal;letter-spacing:0.3px;">-$10,000</div>
<div class="t" style="left:949.15px;width:400px;text-align:center;top:732px;color:#a8a8a8;font-size:13px;font-weight:normal;letter-spacing:0.3px;">=</div>
<div class="t" style="left:839.80px;width:400px;text-align:right;top:732px;color:#008000;font-size:14px;font-weight:normal;letter-spacing:0.3px;">$37,080</div>
<div class="t" style="left:928.80px;width:400px;text-align:right;top:732px;color:#000;font-size:14px;font-weight:normal;letter-spacing:0.3px;">$664,814</div>
<div class="t" style="left:408px;top:753px;color:#000;font-size:14px;font-weight:normal;letter-spacing:0.3px;">2032</div>
<div class="t" style="left:93.30px;width:400px;text-align:right;top:753px;color:#000;font-size:14px;font-weight:normal;letter-spacing:0.3px;">57</div>
<div class="t" style="left:150.30px;width:400px;text-align:right;top:753px;color:#000;font-size:14px;font-weight:normal;letter-spacing:0.3px;">55</div>
<div class="t" style="left:247.80px;width:400px;text-align:right;top:753px;color:#000;font-size:14px;font-weight:normal;letter-spacing:0.3px;">$664,814</div>
<div class="t" style="left:335.80px;width:400px;text-align:right;top:753px;color:#000;font-size:14px;font-weight:normal;letter-spacing:0.3px;">7.5%</div>
<div class="t" style="left:415.30px;width:400px;text-align:right;top:753px;color:#008000;font-size:14px;font-weight:normal;letter-spacing:0.3px;">$49,861</div>
<div class="t" style="left:626.65px;width:400px;text-align:center;top:753.8px;color:#a8a8a8;font-size:13px;font-weight:normal;letter-spacing:0.3px;">-</div>
<div class="t" style="left:514.80px;width:400px;text-align:right;top:753px;color:#ff0000;font-size:14px;font-weight:normal;letter-spacing:0.3px;">$0</div>
<div class="t" style="left:727.15px;width:400px;text-align:center;top:753px;color:#a8a8a8;font-size:13px;font-weight:normal;letter-spacing:0.3px;">+</div>
<div class="t" style="left:608.80px;width:400px;text-align:right;top:753px;color:#000;font-size:14px;font-weight:normal;letter-spacing:0.3px;">0</div>
<div class="t" style="left:825.65px;width:400px;text-align:center;top:753px;color:#a8a8a8;font-size:13px;font-weight:normal;letter-spacing:0.3px;">+</div>
<div class="t" style="left:726.80px;width:400px;text-align:right;top:753px;color:#000;font-size:14px;font-weight:normal;letter-spacing:0.3px;">-$10,000</div>
<div class="t" style="left:949.15px;width:400px;text-align:center;top:753px;color:#a8a8a8;font-size:13px;font-weight:normal;letter-spacing:0.3px;">=</div>
<div class="t" style="left:839.80px;width:400px;text-align:right;top:753px;color:#008000;font-size:14px;font-weight:normal;letter-spacing:0.3px;">$39,861</div>
<div class="t" style="left:928.80px;width:400px;text-align:right;top:753px;color:#000;font-size:14px;font-weight:normal;letter-spacing:0.3px;">$704,675</div>
<div class="t" style="left:408px;top:774px;color:#000;font-size:14px;font-weight:normal;letter-spacing:0.3px;">2033</div>
<div class="t" style="left:93.30px;width:400px;text-align:right;top:774px;color:#000;font-size:14px;font-weight:normal;letter-spacing:0.3px;">58</div>
<div class="t" style="left:150.30px;width:400px;text-align:right;top:774px;color:#000;font-size:14px;font-weight:normal;letter-spacing:0.3px;">56</div>
<div class="t" style="left:247.80px;width:400px;text-align:right;top:774px;color:#000;font-size:14px;font-weight:normal;letter-spacing:0.3px;">$704,675</div>
<div class="t" style="left:335.80px;width:400px;text-align:right;top:774px;color:#000;font-size:14px;font-weight:normal;letter-spacing:0.3px;">7.5%</div>
<div class="t" style="left:415.30px;width:400px;text-align:right;top:774px;color:#008000;font-size:14px;font-weight:normal;letter-spacing:0.3px;">$52,851</div>
<div class="t" style="left:626.65px;width:400px;text-align:center;top:774.8px;color:#a8a8a8;font-size:13px;font-weight:normal;letter-spacing:0.3px;">-</div>
<div class="t" style="left:514.80px;width:400px;text-align:right;top:774px;color:#ff0000;font-size:14px;font-weight:normal;letter-spacing:0.3px;">$0</div>
<div class="t" style="left:727.15px;width:400px;text-align:center;top:774px;color:#a8a8a8;font-size:13px;font-weight:normal;letter-spacing:0.3px;">+</div>
<div class="t" style="left:608.80px;width:400px;text-align:right;top:774px;color:#000;font-size:14px;font-weight:normal;letter-spacing:0.3px;">0</div>
<div class="t" style="left:825.65px;width:400px;text-align:center;top:774px;color:#a8a8a8;font-size:13px;font-weight:normal;letter-spacing:0.3px;">+</div>
<div class="t" style="left:726.80px;width:400px;text-align:right;top:774px;color:#000;font-size:14px;font-weight:normal;letter-spacing:0.3px;">-$10,000</div>
<div class="t" style="left:949.15px;width:400px;text-align:center;top:774px;color:#a8a8a8;font-size:13px;font-weight:normal;letter-spacing:0.3px;">=</div>
<div class="t" style="left:839.80px;width:400px;text-align:right;top:774px;color:#008000;font-size:14px;font-weight:normal;letter-spacing:0.3px;">$42,851</div>
<div class="t" style="left:928.80px;width:400px;text-align:right;top:774px;color:#000;font-size:14px;font-weight:normal;letter-spacing:0.3px;">$747,526</div>
<div class="t" style="left:408px;top:795px;color:#000;font-size:14px;font-weight:normal;letter-spacing:0.3px;">2034</div>
<div class="t" style="left:93.30px;width:400px;text-align:right;top:795px;color:#000;font-size:14px;font-weight:normal;letter-spacing:0.3px;">59</div>
<div class="t" style="left:150.30px;width:400px;text-align:right;top:795px;color:#000;font-size:14px;font-weight:normal;letter-spacing:0.3px;">57</div>
<div class="t" style="left:247.80px;width:400px;text-align:right;top:795px;color:#000;font-size:14px;font-weight:normal;letter-spacing:0.3px;">$747,526</div>
<div class="t" style="left:335.80px;width:400px;text-align:right;top:795px;color:#000;font-size:14px;font-weight:normal;letter-spacing:0.3px;">7.5%</div>
<div class="t" style="left:415.30px;width:400px;text-align:right;top:795px;color:#008000;font-size:14px;font-weight:normal;letter-spacing:0.3px;">$56,064</div>
<div class="t" style="left:626.65px;width:400px;text-align:center;top:795.8px;color:#a8a8a8;font-size:13px;font-weight:normal;letter-spacing:0.3px;">-</div>
<div class="t" style="left:514.80px;width:400px;text-align:right;top:795px;color:#ff0000;font-size:14px;font-weight:normal;letter-spacing:0.3px;">$0</div>
<div class="t" style="left:727.15px;width:400px;text-align:center;top:795px;color:#a8a8a8;font-size:13px;font-weight:normal;letter-spacing:0.3px;">+</div>
<div class="t" style="left:608.80px;width:400px;text-align:right;top:795px;color:#000;font-size:14px;font-weight:normal;letter-spacing:0.3px;">0</div>
<div class="t" style="left:825.65px;width:400px;text-align:center;top:795px;color:#a8a8a8;font-size:13px;font-weight:normal;letter-spacing:0.3px;">+</div>
<div class="t" style="left:726.80px;width:400px;text-align:right;top:795px;color:#000;font-size:14px;font-weight:normal;letter-spacing:0.3px;">-$10,000</div>
<div class="t" style="left:949.15px;width:400px;text-align:center;top:795px;color:#a8a8a8;font-size:13px;font-weight:normal;letter-spacing:0.3px;">=</div>
<div class="t" style="left:839.80px;width:400px;text-align:right;top:795px;color:#008000;font-size:14px;font-weight:normal;letter-spacing:0.3px;">$46,064</div>
<div class="t" style="left:928.80px;width:400px;text-align:right;top:795px;color:#000;font-size:14px;font-weight:normal;letter-spacing:0.3px;">$793,590</div>
<div class="t" style="left:408px;top:816px;color:#000;font-size:14px;font-weight:normal;letter-spacing:0.3px;">2035</div>
<div class="t" style="left:93.30px;width:400px;text-align:right;top:816px;color:#000;font-size:14px;font-weight:normal;letter-spacing:0.3px;">60</div>
<div class="t" style="left:150.30px;width:400px;text-align:right;top:816px;color:#000;font-size:14px;font-weight:normal;letter-spacing:0.3px;">58</div>
<div class="t" style="left:247.80px;width:400px;text-align:right;top:816px;color:#000;font-size:14px;font-weight:normal;letter-spacing:0.3px;">$793,590</div>
<div class="t" style="left:335.80px;width:400px;text-align:right;top:816px;color:#000;font-size:14px;font-weight:normal;letter-spacing:0.3px;">6.0%</div>
<div class="t" style="left:415.30px;width:400px;text-align:right;top:816px;color:#008000;font-size:14px;font-weight:normal;letter-spacing:0.3px;">$47,615</div>
<div class="t" style="left:626.65px;width:400px;text-align:center;top:816.8px;color:#a8a8a8;font-size:13px;font-weight:normal;letter-spacing:0.3px;">-</div>
<div class="t" style="left:514.80px;width:400px;text-align:right;top:816px;color:#ff0000;font-size:14px;font-weight:normal;letter-spacing:0.3px;">$0</div>
<div class="t" style="left:727.15px;width:400px;text-align:center;top:816px;color:#a8a8a8;font-size:13px;font-weight:normal;letter-spacing:0.3px;">+</div>
<div class="t" style="left:608.80px;width:400px;text-align:right;top:816px;color:#000;font-size:14px;font-weight:normal;letter-spacing:0.3px;">0</div>
<div class="t" style="left:825.65px;width:400px;text-align:center;top:816px;color:#a8a8a8;font-size:13px;font-weight:normal;letter-spacing:0.3px;">+</div>
<div class="t" style="left:726.80px;width:400px;text-align:right;top:816px;color:#000;font-size:14px;font-weight:normal;letter-spacing:0.3px;">-$10,000</div>
<div class="t" style="left:949.15px;width:400px;text-align:center;top:816px;color:#a8a8a8;font-size:13px;font-weight:normal;letter-spacing:0.3px;">=</div>
<div class="t" style="left:839.80px;width:400px;text-align:right;top:816px;color:#008000;font-size:14px;font-weight:normal;letter-spacing:0.3px;">$37,615</div>
<div class="t" style="left:928.80px;width:400px;text-align:right;top:816px;color:#000;font-size:14px;font-weight:normal;letter-spacing:0.3px;">$831,206</div>
<div class="t" style="left:408px;top:837px;color:#000;font-size:14px;font-weight:normal;letter-spacing:0.3px;">2036</div>
<div class="t" style="left:93.30px;width:400px;text-align:right;top:837px;color:#000;font-size:14px;font-weight:normal;letter-spacing:0.3px;">61</div>
<div class="t" style="left:150.30px;width:400px;text-align:right;top:837px;color:#000;font-size:14px;font-weight:normal;letter-spacing:0.3px;">59</div>
<div class="t" style="left:247.80px;width:400px;text-align:right;top:837px;color:#000;font-size:14px;font-weight:normal;letter-spacing:0.3px;">$831,206</div>
<div class="t" style="left:335.80px;width:400px;text-align:right;top:837px;color:#000;font-size:14px;font-weight:normal;letter-spacing:0.3px;">6.0%</div>
<div class="t" style="left:415.30px;width:400px;text-align:right;top:837px;color:#008000;font-size:14px;font-weight:normal;letter-spacing:0.3px;">$49,872</div>
<div class="t" style="left:626.65px;width:400px;text-align:center;top:837.8px;color:#a8a8a8;font-size:13px;font-weight:normal;letter-spacing:0.3px;">-</div>
<div class="t" style="left:514.80px;width:400px;text-align:right;top:837px;color:#ff0000;font-size:14px;font-weight:normal;letter-spacing:0.3px;">$0</div>
<div class="t" style="left:727.15px;width:400px;text-align:center;top:837px;color:#a8a8a8;font-size:13px;font-weight:normal;letter-spacing:0.3px;">+</div>
<div class="t" style="left:608.80px;width:400px;text-align:right;top:837px;color:#000;font-size:14px;font-weight:normal;letter-spacing:0.3px;">0</div>
<div class="t" style="left:825.65px;width:400px;text-align:center;top:837px;color:#a8a8a8;font-size:13px;font-weight:normal;letter-spacing:0.3px;">+</div>
<div class="t" style="left:726.80px;width:400px;text-align:right;top:837px;color:#000;font-size:14px;font-weight:normal;letter-spacing:0.3px;">-$10,000</div>
<div class="t" style="left:949.15px;width:400px;text-align:center;top:837px;color:#a8a8a8;font-size:13px;font-weight:normal;letter-spacing:0.3px;">=</div>
<div class="t" style="left:839.80px;width:400px;text-align:right;top:837px;color:#008000;font-size:14px;font-weight:normal;letter-spacing:0.3px;">$39,872</div>
<div class="t" style="left:928.80px;width:400px;text-align:right;top:837px;color:#000;font-size:14px;font-weight:normal;letter-spacing:0.3px;">$871,078</div>
<div class="t" style="left:408px;top:858px;color:#000;font-size:14px;font-weight:normal;letter-spacing:0.3px;">2037</div>
<div class="t" style="left:93.30px;width:400px;text-align:right;top:858px;color:#000;font-size:14px;font-weight:normal;letter-spacing:0.3px;">62</div>
<div class="t" style="left:150.30px;width:400px;text-align:right;top:858px;color:#000;font-size:14px;font-weight:normal;letter-spacing:0.3px;">60</div>
<div class="t" style="left:247.80px;width:400px;text-align:right;top:858px;color:#000;font-size:14px;font-weight:normal;letter-spacing:0.3px;">$871,078</div>
<div class="t" style="left:335.80px;width:400px;text-align:right;top:858px;color:#000;font-size:14px;font-weight:normal;letter-spacing:0.3px;">6.0%</div>
<div class="t" style="left:415.30px;width:400px;text-align:right;top:858px;color:#008000;font-size:14px;font-weight:normal;letter-spacing:0.3px;">$52,265</div>
<div class="t" style="left:626.65px;width:400px;text-align:center;top:858.8px;color:#a8a8a8;font-size:13px;font-weight:normal;letter-spacing:0.3px;">-</div>
<div class="t" style="left:514.80px;width:400px;text-align:right;top:858px;color:#ff0000;font-size:14px;font-weight:normal;letter-spacing:0.3px;">$0</div>
<div class="t" style="left:727.15px;width:400px;text-align:center;top:858px;color:#a8a8a8;font-size:13px;font-weight:normal;letter-spacing:0.3px;">+</div>
<div class="t" style="left:608.80px;width:400px;text-align:right;top:858px;color:#000;font-size:14px;font-weight:normal;letter-spacing:0.3px;">0</div>
<div class="t" style="left:825.65px;width:400px;text-align:center;top:858px;color:#a8a8a8;font-size:13px;font-weight:normal;letter-spacing:0.3px;">+</div>
<div class="t" style="left:726.80px;width:400px;text-align:right;top:858px;color:#000;font-size:14px;font-weight:normal;letter-spacing:0.3px;">-$10,000</div>
<div class="t" style="left:949.15px;width:400px;text-align:center;top:858px;color:#a8a8a8;font-size:13px;font-weight:normal;letter-spacing:0.3px;">=</div>
<div class="t" style="left:839.80px;width:400px;text-align:right;top:858px;color:#008000;font-size:14px;font-weight:normal;letter-spacing:0.3px;">$42,265</div>
<div class="t" style="left:928.80px;width:400px;text-align:right;top:858px;color:#000;font-size:14px;font-weight:normal;letter-spacing:0.3px;">$913,343</div>
<div class="t" style="left:408px;top:879px;color:#000;font-size:14px;font-weight:normal;letter-spacing:0.3px;">2038</div>
<div class="t" style="left:93.30px;width:400px;text-align:right;top:879px;color:#000;font-size:14px;font-weight:normal;letter-spacing:0.3px;">63</div>
<div class="t" style="left:150.30px;width:400px;text-align:right;top:879px;color:#000;font-size:14px;font-weight:normal;letter-spacing:0.3px;">61</div>
<div class="t" style="left:247.80px;width:400px;text-align:right;top:879px;color:#000;font-size:14px;font-weight:normal;letter-spacing:0.3px;">$913,343</div>
<div class="t" style="left:335.80px;width:400px;text-align:right;top:879px;color:#000;font-size:14px;font-weight:normal;letter-spacing:0.3px;">6.0%</div>
<div class="t" style="left:415.30px;width:400px;text-align:right;top:879px;color:#008000;font-size:14px;font-weight:normal;letter-spacing:0.3px;">$54,801</div>
<div class="t" style="left:626.65px;width:400px;text-align:center;top:879.8px;color:#a8a8a8;font-size:13px;font-weight:normal;letter-spacing:0.3px;">-</div>
<div class="t" style="left:514.80px;width:400px;text-align:right;top:879px;color:#ff0000;font-size:14px;font-weight:normal;letter-spacing:0.3px;">$0</div>
<div class="t" style="left:727.15px;width:400px;text-align:center;top:879px;color:#a8a8a8;font-size:13px;font-weight:normal;letter-spacing:0.3px;">+</div>
<div class="t" style="left:608.80px;width:400px;text-align:right;top:879px;color:#000;font-size:14px;font-weight:normal;letter-spacing:0.3px;">0</div>
<div class="t" style="left:825.65px;width:400px;text-align:center;top:879px;color:#a8a8a8;font-size:13px;font-weight:normal;letter-spacing:0.3px;">+</div>
<div class="t" style="left:726.80px;width:400px;text-align:right;top:879px;color:#000;font-size:14px;font-weight:normal;letter-spacing:0.3px;">-$10,000</div>
<div class="t" style="left:949.15px;width:400px;text-align:center;top:879px;color:#a8a8a8;font-size:13px;font-weight:normal;letter-spacing:0.3px;">=</div>
<div class="t" style="left:839.80px;width:400px;text-align:right;top:879px;color:#008000;font-size:14px;font-weight:normal;letter-spacing:0.3px;">$44,801</div>
<div class="t" style="left:928.80px;width:400px;text-align:right;top:879px;color:#000;font-size:14px;font-weight:normal;letter-spacing:0.3px;">$958,143</div>
<div class="t" style="left:408px;top:900px;color:#000;font-size:14px;font-weight:normal;letter-spacing:0.3px;">2039</div>
<div class="t" style="left:93.30px;width:400px;text-align:right;top:900px;color:#000;font-size:14px;font-weight:normal;letter-spacing:0.3px;">64</div>
<div class="t" style="left:150.30px;width:400px;text-align:right;top:900px;color:#000;font-size:14px;font-weight:normal;letter-spacing:0.3px;">62</div>
<div class="t" style="left:247.80px;width:400px;text-align:right;top:900px;color:#000;font-size:14px;font-weight:normal;letter-spacing:0.3px;">$958,143</div>
<div class="t" style="left:335.80px;width:400px;text-align:right;top:900px;color:#000;font-size:14px;font-weight:normal;letter-spacing:0.3px;">6.0%</div>
<div class="t" style="left:415.30px;width:400px;text-align:right;top:900px;color:#008000;font-size:14px;font-weight:normal;letter-spacing:0.3px;">$57,489</div>
<div class="t" style="left:626.65px;width:400px;text-align:center;top:900.8px;color:#a8a8a8;font-size:13px;font-weight:normal;letter-spacing:0.3px;">-</div>
<div class="t" style="left:514.80px;width:400px;text-align:right;top:900px;color:#ff0000;font-size:14px;font-weight:normal;letter-spacing:0.3px;">$0</div>
<div class="t" style="left:727.15px;width:400px;text-align:center;top:900px;color:#a8a8a8;font-size:13px;font-weight:normal;letter-spacing:0.3px;">+</div>
<div class="t" style="left:608.80px;width:400px;text-align:right;top:900px;color:#000;font-size:14px;font-weight:normal;letter-spacing:0.3px;">0</div>
<div class="t" style="left:825.65px;width:400px;text-align:center;top:900px;color:#a8a8a8;font-size:13px;font-weight:normal;letter-spacing:0.3px;">+</div>
<div class="t" style="left:726.80px;width:400px;text-align:right;top:900px;color:#000;font-size:14px;font-weight:normal;letter-spacing:0.3px;">-$10,000</div>
<div class="t" style="left:949.15px;width:400px;text-align:center;top:900px;color:#a8a8a8;font-size:13px;font-weight:normal;letter-spacing:0.3px;">=</div>
<div class="t" style="left:839.80px;width:400px;text-align:right;top:900px;color:#008000;font-size:14px;font-weight:normal;letter-spacing:0.3px;">$47,489</div>
<div class="t" style="left:928.80px;width:400px;text-align:right;top:900px;color:#000;font-size:14px;font-weight:normal;letter-spacing:0.3px;">$1,005,632</div>
<div class="t" style="left:408px;top:921px;color:#000;font-size:14px;font-weight:normal;letter-spacing:0.3px;">2040</div>
<div class="t" style="left:93.30px;width:400px;text-align:right;top:921px;color:#000;font-size:14px;font-weight:normal;letter-spacing:0.3px;">65</div>
<div class="t" style="left:150.30px;width:400px;text-align:right;top:921px;color:#000;font-size:14px;font-weight:normal;letter-spacing:0.3px;">63</div>
<div class="t" style="left:247.80px;width:400px;text-align:right;top:921px;color:#000;font-size:14px;font-weight:normal;letter-spacing:0.3px;">$1,005,632</div>
<div class="t" style="left:335.80px;width:400px;text-align:right;top:921px;color:#000;font-size:14px;font-weight:normal;letter-spacing:0.3px;">6.0%</div>
<div class="t" style="left:415.30px;width:400px;text-align:right;top:921px;color:#008000;font-size:14px;font-weight:normal;letter-spacing:0.3px;">$60,338</div>
<div class="t" style="left:626.65px;width:400px;text-align:center;top:921.8px;color:#a8a8a8;font-size:13px;font-weight:normal;letter-spacing:0.3px;">-</div>
<div class="t" style="left:514.80px;width:400px;text-align:right;top:921px;color:#ff0000;font-size:14px;font-weight:normal;letter-spacing:0.3px;">$40,225</div>
<div class="t" style="left:727.15px;width:400px;text-align:center;top:921px;color:#a8a8a8;font-size:13px;font-weight:normal;letter-spacing:0.3px;">+</div>
<div class="t" style="left:608.80px;width:400px;text-align:right;top:921px;color:#000;font-size:14px;font-weight:normal;letter-spacing:0.3px;">0</div>
<div class="t" style="left:825.65px;width:400px;text-align:center;top:921px;color:#a8a8a8;font-size:13px;font-weight:normal;letter-spacing:0.3px;">+</div>
<div class="t" style="left:726.80px;width:400px;text-align:right;top:921px;color:#000;font-size:14px;font-weight:normal;letter-spacing:0.3px;">-$10,000</div>
<div class="t" style="left:949.15px;width:400px;text-align:center;top:921px;color:#a8a8a8;font-size:13px;font-weight:normal;letter-spacing:0.3px;">=</div>
<div class="t" style="left:839.80px;width:400px;text-align:right;top:921px;color:#008000;font-size:14px;font-weight:normal;letter-spacing:0.3px;">$10,113</div>
<div class="t" style="left:928.80px;width:400px;text-align:right;top:921px;color:#000;font-size:14px;font-weight:normal;letter-spacing:0.3px;">$1,015,744</div>
<div class="t" style="left:408px;top:942px;color:#000;font-size:14px;font-weight:normal;letter-spacing:0.3px;">2041</div>
<div class="t" style="left:93.30px;width:400px;text-align:right;top:942px;color:#000;font-size:14px;font-weight:normal;letter-spacing:0.3px;">66</div>
<div class="t" style="left:150.30px;width:400px;text-align:right;top:942px;color:#000;font-size:14px;font-weight:normal;letter-spacing:0.3px;">64</div>
<div class="t" style="left:247.80px;width:400px;text-align:right;top:942px;color:#000;font-size:14px;font-weight:normal;letter-spacing:0.3px;">$1,015,744</div>
<div class="t" style="left:335.80px;width:400px;text-align:right;top:942px;color:#000;font-size:14px;font-weight:normal;letter-spacing:0.3px;">6.0%</div>
<div class="t" style="left:415.30px;width:400px;text-align:right;top:942px;color:#008000;font-size:14px;font-weight:normal;letter-spacing:0.3px;">$60,945</div>
<div class="t" style="left:626.65px;width:400px;text-align:center;top:942.8px;color:#a8a8a8;font-size:13px;font-weight:normal;letter-spacing:0.3px;">-</div>
<div class="t" style="left:514.80px;width:400px;text-align:right;top:942px;color:#ff0000;font-size:14px;font-weight:normal;letter-spacing:0.3px;">$40,630</div>
<div class="t" style="left:727.15px;width:400px;text-align:center;top:942px;color:#a8a8a8;font-size:13px;font-weight:normal;letter-spacing:0.3px;">+</div>
<div class="t" style="left:608.80px;width:400px;text-align:right;top:942px;color:#000;font-size:14px;font-weight:normal;letter-spacing:0.3px;">0</div>
<div class="t" style="left:825.65px;width:400px;text-align:center;top:942px;color:#a8a8a8;font-size:13px;font-weight:normal;letter-spacing:0.3px;">+</div>
<div class="t" style="left:726.80px;width:400px;text-align:right;top:942px;color:#000;font-size:14px;font-weight:normal;letter-spacing:0.3px;">$0</div>
<div class="t" style="left:949.15px;width:400px;text-align:center;top:942px;color:#a8a8a8;font-size:13px;font-weight:normal;letter-spacing:0.3px;">=</div>
<div class="t" style="left:839.80px;width:400px;text-align:right;top:942px;color:#008000;font-size:14px;font-weight:normal;letter-spacing:0.3px;">$20,315</div>
<div class="t" style="left:928.80px;width:400px;text-align:right;top:942px;color:#000;font-size:14px;font-weight:normal;letter-spacing:0.3px;">$1,036,059</div>
<div style="position:absolute;left:405px;top:32px;width:333px;height:49px;background:#eafcea;"></div>
<div class="t" style="left:371.50px;width:400px;text-align:center;top:11.5px;color:#1c2438;font-size:13px;font-weight:bold;letter-spacing:0.25px;">PORTFOLIO GOAL</div>
<div style="position:absolute;left:405px;top:31px;width:333px;height:0;border-top:1px dotted #3f7fe6"></div>
<div class="t" style="left:371.80px;width:400px;text-align:center;top:46px;color:#000;font-size:14px;font-weight:bold;letter-spacing:0.3px;">$1,000,000</div>
<div class="t" style="left:792.50px;width:400px;text-align:center;top:11.5px;color:#1c2438;font-size:13px;font-weight:bold;letter-spacing:0.3px;">PLAN OUTCOME</div>
<div style="position:absolute;left:817px;top:31px;width:351px;height:0;border-top:1px dotted #3f7fe6"></div>
<div class="t" style="left:792.50px;width:400px;text-align:center;top:47px;color:#6cc06c;font-size:14px;font-weight:normal;letter-spacing:0.25px;">Goal reached in 2039 at ages 64 &amp; 62!</div>
<svg style="position:absolute;left:770px;top:34px" width="18" height="10"><path d="M1.5 5H11" stroke="#39405a" stroke-width="1.5"/><path d="M10 1.8L15 5L10 8.2Z" fill="#1d2440"/></svg>
<svg style="position:absolute;left:1246px;top:2px" width="83" height="54" viewBox="0 0 83 54">
<rect x="1.5" y="1.5" width="79" height="50" fill="#fff" stroke="#3a8de6" stroke-width="1.2"/>
<rect x="1" y="1" width="80" height="33" fill="#2f86dc"/>
<text x="8.3" y="27.5" font-family="&quot;Liberation Sans&quot;, sans-serif" font-weight="bold" font-size="29" fill="#fff" letter-spacing="-0.55">tiller</text>
<path d="M66.5 6L73 6L73 12.5Z" fill="#fff"/>
<text x="66" y="26" font-family="&quot;Liberation Sans&quot;, sans-serif" font-weight="bold" font-size="5" fill="#cfe3fa">TM</text>
<text x="5.5" y="47" font-family="&quot;Liberation Sans&quot;, sans-serif" font-weight="bold" font-size="11" fill="#1f7ad8" letter-spacing="0.4">COMMUNITY</text>
</svg>
<div class="t" style="left:1235px;top:62px;color:#6b6b78;font-size:14px;font-weight:normal;text-decoration:underline;text-underline-offset:1.5px;letter-spacing:0.15px;">Learn &amp; Discuss</div>
<svg style="position:absolute;left:0;top:0" width="1346" height="963"><rect x="412.5" y="81.5" width="822" height="335" rx="13" ry="13" fill="#fff" stroke="#8c8c8c" stroke-width="1.3"/><line x1="526" x2="1218" y1="299.5" y2="299.5" stroke="#b9b9b9" stroke-width="1"/><line x1="526" x2="1218" y1="276.5" y2="276.5" stroke="#b9b9b9" stroke-width="1"/><line x1="526" x2="1218" y1="253.5" y2="253.5" stroke="#b9b9b9" stroke-width="1"/><line x1="526" x2="1218" y1="229.5" y2="229.5" stroke="#b9b9b9" stroke-width="1"/><line x1="526" x2="1218" y1="206.5" y2="206.5" stroke="#b9b9b9" stroke-width="1"/><line x1="526" x2="1218" y1="183.5" y2="183.5" stroke="#b9b9b9" stroke-width="1"/><line x1="526" x2="1218" y1="159.5" y2="159.5" stroke="#b9b9b9" stroke-width="1"/><line x1="526" x2="1218" y1="136.5" y2="136.5" stroke="#b9b9b9" stroke-width="1"/><line x1="526.5" x2="526.5" y1="136" y2="324" stroke="#888" stroke-width="1"/><line x1="526" x2="1218" y1="323.5" y2="323.5" stroke="#888" stroke-width="1"/><polyline points="536.5,307.8 558.8,306.8 581.1,305.8 603.4,304.7 625.8,303.6 648.1,302.4 670.4,301.2 692.7,300.5 715.0,300.2 737.3,299.8 759.6,299.5 781.9,299.1 804.3,298.7 826.6,298.4 848.9,298.0 871.2,297.5 893.5,297.1 915.8,297.7 938.1,297.8 960.5,298.0 982.8,298.1 1005.1,298.2 1027.4,298.3 1049.7,298.5 1072.0,298.6 1094.3,298.7 1116.6,298.8 1139.0,298.9 1161.3,299.1 1183.6,299.2 1205.9,299.3" fill="none" stroke="#ff0000" stroke-width="2.4" stroke-dasharray="7 7"/><polyline points="536.5,307.5 558.8,305.5 581.1,303.3 603.4,300.9 625.8,298.2 648.1,295.2 670.4,291.9 692.7,288.8 715.0,285.9 737.3,282.6 759.6,279.0 781.9,275.1 804.3,270.8 826.6,266.0 848.9,260.7 871.2,255.0 893.5,248.6 915.8,244.6 938.1,239.9 960.5,234.9 982.8,229.6 1005.1,224.0 1027.4,218.1 1049.7,211.8 1072.0,205.1 1094.3,198.0 1116.6,190.5 1139.0,182.6 1161.3,174.1 1183.6,165.2 1205.9,155.7" fill="none" stroke="#38761d" stroke-width="2.3" stroke-dasharray="7 7"/><polyline points="536.5,307.6 558.8,306.0 581.1,304.3 603.4,302.4 625.8,300.4 648.1,298.2 670.4,295.9 692.7,293.8 715.0,292.1 737.3,290.2 759.6,288.2 781.9,286.1 804.3,284.3 826.6,282.5 848.9,280.5 871.2,278.4 893.5,276.2 915.8,275.7 938.1,274.8 960.5,273.8 982.8,272.8 1005.1,271.8 1027.4,271.3 1049.7,270.8 1072.0,270.3 1094.3,269.8 1116.6,269.2 1139.0,268.7 1161.3,268.1 1183.6,267.6 1205.9,267.0" fill="none" stroke="#000" stroke-width="2.0"/><circle cx="536.5" cy="306.6" r="2.35" fill="#000"/><circle cx="558.8" cy="305.0" r="2.35" fill="#000"/><circle cx="581.1" cy="303.3" r="2.35" fill="#000"/><circle cx="603.4" cy="301.4" r="2.35" fill="#000"/><circle cx="625.8" cy="299.4" r="2.35" fill="#000"/><circle cx="648.1" cy="297.2" r="2.35" fill="#000"/><circle cx="670.4" cy="294.9" r="2.35" fill="#000"/><circle cx="692.7" cy="292.8" r="2.35" fill="#000"/><circle cx="715.0" cy="291.1" r="2.35" fill="#000"/><circle cx="737.3" cy="289.2" r="2.35" fill="#000"/><circle cx="759.6" cy="287.2" r="2.35" fill="#000"/><circle cx="781.9" cy="285.1" r="2.35" fill="#000"/><circle cx="804.3" cy="283.3" r="2.35" fill="#000"/><circle cx="826.6" cy="281.5" r="2.35" fill="#000"/><circle cx="848.9" cy="279.5" r="2.35" fill="#000"/><circle cx="871.2" cy="277.4" r="2.35" fill="#000"/><circle cx="893.5" cy="275.2" r="2.35" fill="#000"/><circle cx="915.8" cy="274.7" r="2.35" fill="#000"/><circle cx="938.1" cy="273.8" r="2.35" fill="#000"/><circle cx="960.5" cy="272.8" r="2.35" fill="#000"/><circle cx="982.8" cy="271.8" r="2.35" fill="#000"/><circle cx="1005.1" cy="270.8" r="2.35" fill="#000"/><circle cx="1027.4" cy="270.3" r="2.35" fill="#000"/><circle cx="1049.7" cy="269.8" r="2.35" fill="#000"/><circle cx="1072.0" cy="269.3" r="2.35" fill="#000"/><circle cx="1094.3" cy="268.8" r="2.35" fill="#000"/><circle cx="1116.6" cy="268.2" r="2.35" fill="#000"/><circle cx="1139.0" cy="267.7" r="2.35" fill="#000"/><circle cx="1161.3" cy="267.1" r="2.35" fill="#000"/><circle cx="1183.6" cy="266.6" r="2.35" fill="#000"/><circle cx="1205.9" cy="266.0" r="2.35" fill="#000"/><line x1="536.5" x2="1205.9" y1="276.5" y2="276.5" stroke="#ffd966" stroke-width="2.4" stroke-dasharray="7.5 7 1.5 7"/><text x="513.5" y="327.4" text-anchor="end" font-family="&quot;Liberation Sans&quot;, sans-serif" font-size="12.3" fill="#222" letter-spacing="0.3">$0</text><text x="513.5" y="304.1" text-anchor="end" font-family="&quot;Liberation Sans&quot;, sans-serif" font-size="12.3" fill="#222" letter-spacing="0.3">$500,000</text><text x="513.5" y="280.8" text-anchor="end" font-family="&quot;Liberation Sans&quot;, sans-serif" font-size="12.3" fill="#222" letter-spacing="0.3">$1,000,000</text><text x="513.5" y="257.5" text-anchor="end" font-family="&quot;Liberation Sans&quot;, sans-serif" font-size="12.3" fill="#222" letter-spacing="0.3">$1,500,000</text><text x="513.5" y="234.2" text-anchor="end" font-family="&quot;Liberation Sans&quot;, sans-serif" font-size="12.3" fill="#222" letter-spacing="0.3">$2,000,000</text><text x="513.5" y="210.8" text-anchor="end" font-family="&quot;Liberation Sans&quot;, sans-serif" font-size="12.3" fill="#222" letter-spacing="0.3">$2,500,000</text><text x="513.5" y="187.5" text-anchor="end" font-family="&quot;Liberation Sans&quot;, sans-serif" font-size="12.3" fill="#222" letter-spacing="0.3">$3,000,000</text><text x="513.5" y="164.2" text-anchor="end" font-family="&quot;Liberation Sans&quot;, sans-serif" font-size="12.3" fill="#222" letter-spacing="0.3">$3,500,000</text><text x="513.5" y="140.9" text-anchor="end" font-family="&quot;Liberation Sans&quot;, sans-serif" font-size="12.3" fill="#222" letter-spacing="0.3">$4,000,000</text><text x="536.5" y="343.7" text-anchor="middle" font-family="&quot;Liberation Sans&quot;, sans-serif" font-size="12.3" fill="#222" letter-spacing="0.3">2023</text><text x="759.6" y="343.7" text-anchor="middle" font-family="&quot;Liberation Sans&quot;, sans-serif" font-size="12.3" fill="#222" letter-spacing="0.3">2033</text><text x="982.8" y="343.7" text-anchor="middle" font-family="&quot;Liberation Sans&quot;, sans-serif" font-size="12.3" fill="#222" letter-spacing="0.3">2043</text><text x="1205.9" y="343.7" text-anchor="middle" font-family="&quot;Liberation Sans&quot;, sans-serif" font-size="12.3" fill="#222" letter-spacing="0.3">2053</text><text x="823" y="114" text-anchor="middle" font-family="&quot;Liberation Sans&quot;, sans-serif" font-size="23.5" fill="#111" letter-spacing="0.3">Investments</text><line x1="478" x2="512" y1="395" y2="395" stroke="#000" stroke-width="2"/><circle cx="495" cy="395" r="2.8" fill="#000"/><text x="515.5" y="399.5" font-family="&quot;Liberation Sans&quot;, sans-serif" font-size="13" fill="#222" letter-spacing="0.15">Investments End of Year</text><line x1="684.8" x2="720" y1="395" y2="395" stroke="#38761d" stroke-width="2.2" stroke-dasharray="8 5.5"/><text x="722" y="399.5" font-family="&quot;Liberation Sans&quot;, sans-serif" font-size="13" fill="#222" letter-spacing="0.15">Upper Range Growth</text><line x1="868" x2="904" y1="395" y2="395" stroke="#ff0000" stroke-width="2.4" stroke-dasharray="8 6"/><text x="906" y="399.5" font-family="&quot;Liberation Sans&quot;, sans-serif" font-size="13" fill="#222" letter-spacing="0.15">Lower Range Growth</text><line x1="1052.5" x2="1082.5" y1="395" y2="395" stroke="#ffd966" stroke-width="2" stroke-dasharray="8 6 2 6"/><text x="1091.5" y="399.5" font-family="&quot;Liberation Sans&quot;, sans-serif" font-size="13" fill="#222" letter-spacing="0.15">Portfolio Goal</text></svg>
</body></html>
